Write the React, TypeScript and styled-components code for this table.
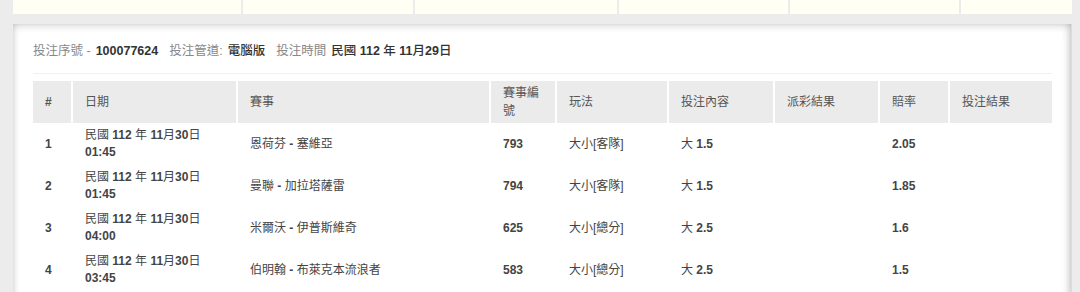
import React from "react";
import styled, { createGlobalStyle } from "styled-components";

const Global = createGlobalStyle`
  html, body { margin: 0; padding: 0; background: #ececec; }
  body {
    font-family: "Liberation Sans", "Noto Sans CJK TC", sans-serif;
    font-size: 12px;
    color: #444;
  }
`;

const Page = styled.div`
  padding: 0 8px 0 13px;
`;

const TopStrip = styled.div`
  display: grid;
  grid-template-columns: 228fr 170fr 202fr 169fr 169fr 111fr;
  column-gap: 2px;
  height: 14px;
`;

const StripCell = styled.div`
  background: #fffff3;
`;

const Card = styled.section`
  margin-top: 10px;
  background: #fff;
  padding: 18px 19px 24px 20px;
  box-shadow: inset 0 3px 8px -2px rgba(0, 0, 0, 0.2),
    inset -8px 0 8px -6px rgba(0, 0, 0, 0.16),
    inset 5px 0 6px -4px rgba(0, 0, 0, 0.1);
  border-right: 1px solid #dcdcdc;
`;

const InfoLine = styled.div`
  font-size: 12.5px;
  line-height: 18px;
  color: #888;
  display: flex;
  gap: 11px;
  white-space: nowrap;
`;

const InfoValue = styled.span`
  color: #333;
  font-weight: 500;
  margin-left: 5px;
`;

const Bold = styled.b`
  font-weight: 700;
`;

const Rule = styled.hr`
  border: 0;
  border-top: 1px solid #f0f0f0;
  margin: 13px 0 7px;
`;

const Table = styled.table`
  width: 100%;
  table-layout: fixed;
  border-collapse: collapse;
  border-spacing: 0;
`;

const Th = styled.th<{ $w?: number }>`
  box-sizing: border-box;
  width: ${(p) => (p.$w ? `${p.$w}px` : "auto")};
  height: 42px;
  padding: 0 12px;
  background: #ebebeb;
  border-right: 2px solid #fff;
  text-align: left;
  font-weight: 400;
  color: #555;
  line-height: 18px;
  vertical-align: middle;
  &:last-child { border-right: 0; }
`;

const Td = styled.td`
  box-sizing: border-box;
  height: 42px;
  padding: 0 12px;
  line-height: 17px;
  vertical-align: middle;
  color: #444;
  border-right: 2px solid transparent;
  &:last-child { border-right: 0; }
`;

const Mixed: React.FC<{ text: string }> = ({ text }) => (
  <>
    {text.split(/([0-9A-Za-z.:\-#]+)/).map((p, i) =>
      i % 2 ? <Bold key={i}>{p}</Bold> : <React.Fragment key={i}>{p}</React.Fragment>
    )}
  </>
);

const columns: { label: string; w?: number }[] = [
  { label: "#", w: 39 },
  { label: "日期", w: 165 },
  { label: "賽事", w: 253 },
  { label: "賽事編號", w: 66 },
  { label: "玩法", w: 112 },
  { label: "投注內容", w: 106 },
  { label: "派彩結果", w: 105 },
  { label: "賠率", w: 70 },
  { label: "投注結果" },
];

const rows = [
  { n: "1", d: "民國 112 年 11月30日", t: "01:45", m: "恩荷芬 - 塞維亞", id: "793", play: "大小[客隊]", bet: "大 1.5", odds: "2.05" },
  { n: "2", d: "民國 112 年 11月30日", t: "01:45", m: "曼聯 - 加拉塔薩雷", id: "794", play: "大小[客隊]", bet: "大 1.5", odds: "1.85" },
  { n: "3", d: "民國 112 年 11月30日", t: "04:00", m: "米爾沃 - 伊普斯維奇", id: "625", play: "大小[總分]", bet: "大 2.5", odds: "1.6" },
  { n: "4", d: "民國 112 年 11月30日", t: "03:45", m: "伯明翰 - 布萊克本流浪者", id: "583", play: "大小[總分]", bet: "大 2.5", odds: "1.5" },
];

export default function App() {
  return (
    <>
      <Global />
      <Page>
        <TopStrip>
          {Array.from({ length: 6 }).map((_, i) => (
            <StripCell key={i} />
          ))}
        </TopStrip>
        <Card>
          <InfoLine>
            <span>
              投注序號 -<InfoValue><Bold>100077624</Bold></InfoValue>
            </span>
            <span>
              投注管道:<InfoValue>電腦版</InfoValue>
            </span>
            <span>
              投注時間<InfoValue><Mixed text="民國 112 年 11月29日" /></InfoValue>
            </span>
          </InfoLine>
          <Rule />
          <Table>
            <thead>
              <tr>
                {columns.map((c) => (
                  <Th key={c.label} $w={c.w}>
                    {c.label === "#" ? <Bold>#</Bold> : c.label}
                  </Th>
                ))}
              </tr>
            </thead>
            <tbody>
              {rows.map((r) => (
                <tr key={r.n}>
                  <Td><Bold>{r.n}</Bold></Td>
                  <Td>
                    <Mixed text={r.d} />
                    <br />
                    <Bold>{r.t}</Bold>
                  </Td>
                  <Td><Mixed text={r.m} /></Td>
                  <Td><Bold>{r.id}</Bold></Td>
                  <Td>{r.play}</Td>
                  <Td><Mixed text={r.bet} /></Td>
                  <Td />
                  <Td><Bold>{r.odds}</Bold></Td>
                  <Td />
                </tr>
              ))}
            </tbody>
          </Table>
        </Card>
      </Page>
    </>
  );
}
